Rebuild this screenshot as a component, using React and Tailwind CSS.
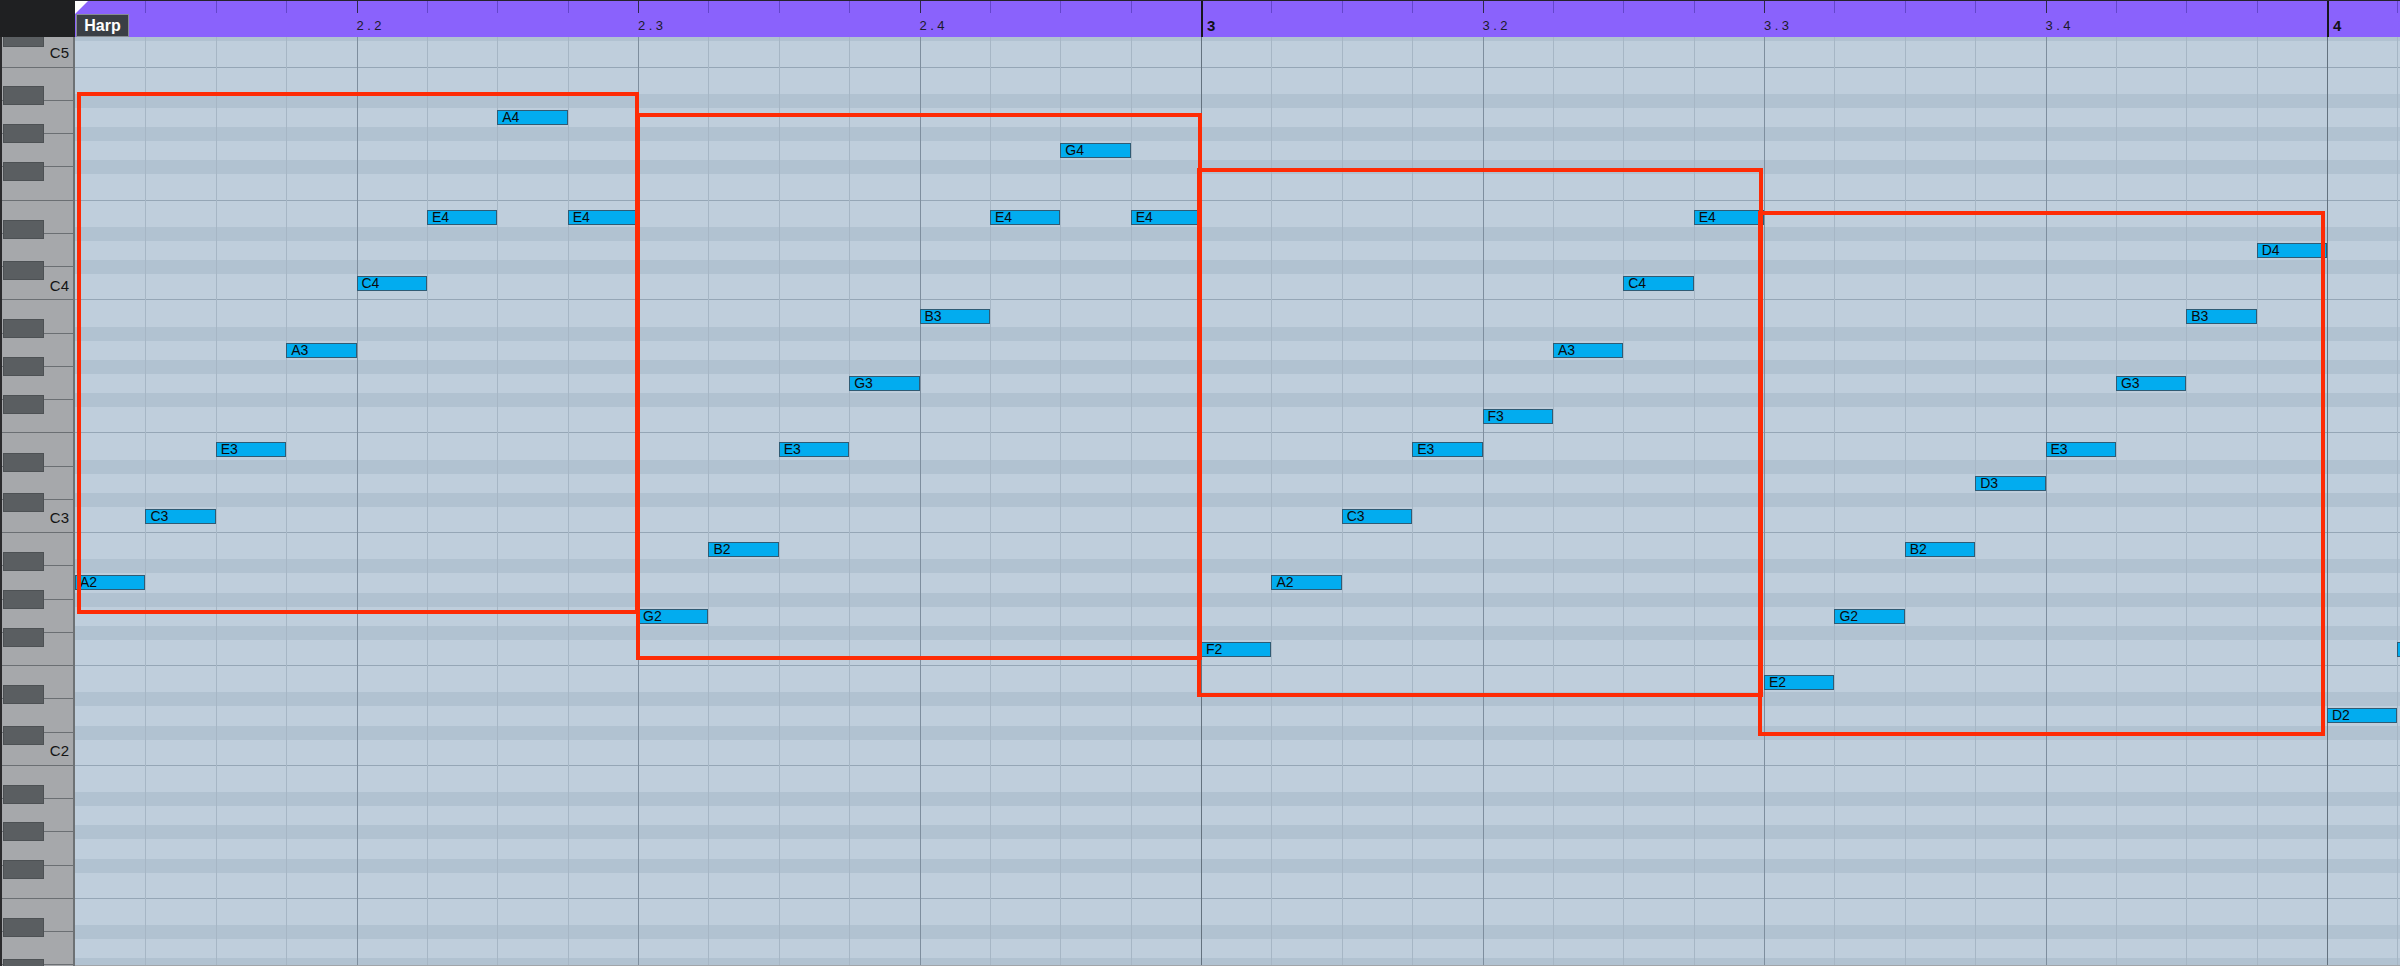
import React from "react";

const COL = 70.375;
const ROW = 33.25;
const ROW0 = -2.7; // top of the C5 row, measured from the top of the roll body
const NAMES = ["C", "B", "A", "G", "F", "E", "D"];

// white-key rows, C5 at the top down to D1
const rows = Array.from({ length: 28 }, (_, k) => {
  const name = NAMES[k % 7];
  const oct = 5 - Math.floor((k + 6) / 7);
  return {
    k,
    name,
    label: name + oct,
    bandTop: name !== "B" && name !== "E",
    bandBottom: name !== "C" && name !== "F",
    line: name === "C" || name === "F",
  };
});

const rowOf = (label) => rows.find((r) => r.label === label).k;

const NOTES = [
  "A2", "C3", "E3", "A3", "C4", "E4", "A4", "E4",
  "G2", "B2", "E3", "G3", "B3", "E4", "G4", "E4",
  "F2", "A2", "C3", "E3", "F3", "A3", "C4", "E4",
  "E2", "G2", "B2", "D3", "E3", "G3", "B3", "D4",
  "D2", "F2",
];

const LABELS = {
  4: "2.2", 8: "2.3", 12: "2.4", 16: "3",
  20: "3.2", 24: "3.3", 28: "3.4", 32: "4",
};

const cols = Array.from({ length: 34 }, (_, i) => i);

// black keys: offset from the white boundary they sit on
const blackKeys = [];
[0, 7, 14, 21, 28].forEach((c) => {
  blackKeys.push(ROW0 + ROW * c - 6.4);
  blackKeys.push(ROW0 + ROW * (c - 1) - 13.9);
  blackKeys.push(ROW0 + ROW * (c - 3) - 5.3);
  blackKeys.push(ROW0 + ROW * (c - 4) - 10);
  blackKeys.push(ROW0 + ROW * (c - 5) - 14.5);
});
const visibleKeys = blackKeys.filter((t) => t > -20 && t < 930);

function HeaderCol({ i }) {
  const label = LABELS[i];
  const bar = i > 0 && i % 16 === 0;
  const beat = i % 4 === 0;
  if (bar) {
    return (
      <div className="h-full w-[70.375px] shrink-0 border-l-2 border-[#17161d] pl-[4px] pt-[16px] text-[15px] font-bold leading-[18px] text-[#121117]">
        {label}
      </div>
    );
  }
  return (
    <div className="h-full w-[70.375px] shrink-0">
      {i > 0 && (
        <div className={"h-[12px] w-px " + (beat ? "bg-[#2e2947]" : "bg-[#6446cb]")} />
      )}
      {label && (
        <div className="mt-[5px] text-[13px] leading-[16px] tracking-[3.5px] text-[#1c1a2a]">
          {label}
        </div>
      )}
    </div>
  );
}

function lineCls(i) {
  if (i === 0) return "";
  if (i % 16 === 0) return "border-l-[1.5px] border-[#64727f]";
  if (i % 4 === 0) return "border-l border-[#7e8e9e]";
  return "border-l border-[#a6b6c5]";
}

export default function App() {
  return (
    <div className="flex h-[966px] w-[2400px] flex-col overflow-hidden bg-[#1f2022] font-['Liberation_Sans',Arial,sans-serif]">
      {/* ruler */}
      <div className="flex h-[37px] shrink-0">
        <div className="w-[75px] shrink-0 bg-[#1f2022]" />
        <div className="relative flex flex-1 overflow-hidden border-t border-[#25232d] bg-[#8a62fc]">
          {cols.map((i) => (
            <HeaderCol key={i} i={i} />
          ))}
          <svg className="absolute -top-[1px] left-0" width="14" height="14" viewBox="0 0 14 14">
            <polygon points="0,0 14,0 0,14" fill="#ffffff" />
          </svg>
          <div className="absolute left-[1px] top-[13px] flex h-[23px] w-[53px] items-center justify-center border border-[#868c92] bg-[#3a3f45] text-[16px] font-bold leading-none text-white">
            Harp
          </div>
        </div>
      </div>

      <div className="flex flex-1">
        {/* keyboard */}
        <div className="relative w-[75px] shrink-0 overflow-hidden border-l-2 border-r-2 border-l-[#2b2b2d] border-r-[#6d7174] bg-[#a6a8ab]">
          <div className="-mt-[2.7px] flex flex-col">
            {rows.map((r) => (
              <div
                key={r.k}
                className="flex h-[33.25px] shrink-0 items-center justify-end border-b border-[#6b6f73] pr-[4px] pt-[4px] text-[15px] leading-none text-[#141414]"
              >
                {r.name === "C" ? r.label : null}
              </div>
            ))}
          </div>
          {visibleKeys.map((t, n) => (
            <div
              key={n}
              className="absolute left-[1px] h-[19px] w-[41px] border border-[#4d5154] bg-[#5a5e61]"
              style={{ top: t }}
            />
          ))}
        </div>

        {/* note grid */}
        <div className="relative flex-1 overflow-hidden border-b-[3px] border-[#a1a5a9] bg-[#bfcedc]">
          <div className="-mt-[2.7px] flex flex-col">
            {rows.map((r) => (
              <div
                key={r.k}
                className={
                  "flex h-[33.25px] shrink-0 flex-col " +
                  (r.line ? "border-b border-[#95a6b6]" : "")
                }
              >
                {r.bandTop && <div className="h-[7px] bg-[#b1c2d1]" />}
                <div className="flex-1" />
                {r.bandBottom && <div className="h-[7px] bg-[#b1c2d1]" />}
              </div>
            ))}
          </div>

          <div className="pointer-events-none absolute inset-0 flex">
            {cols.map((i) => (
              <div key={i} className={"h-full w-[70.375px] shrink-0 " + lineCls(i)} />
            ))}
          </div>

          {NOTES.map((n, i) => (
            <div
              key={i}
              className="absolute flex h-[15px] w-[70.4px] items-center border border-[#2f5b74] bg-[#02acef] pl-[4px] text-[14px] leading-[13px] text-[#0b0b0b]"
              style={{ left: i * COL, top: ROW0 + rowOf(n) * ROW + 9.1 }}
            >
              {/* the last note only peeks in at the right edge, its name is off-screen */}
              {i < NOTES.length - 1 ? n : null}
            </div>
          ))}

          <div className="absolute left-[1.7px] top-[55.3px] h-[522.2px] w-[562.3px] border-[4.5px] border-[#fe2b05]" />
          <div className="absolute left-[561px] top-[75.5px] h-[547px] w-[566px] border-[4.5px] border-[#fe2b05]" />
          <div className="absolute left-[1122px] top-[131.3px] h-[528.7px] w-[565.5px] border-[4.5px] border-[#fe2b05]" />
          <div className="absolute left-[1683px] top-[173.5px] h-[525.5px] w-[567.3px] border-[4.5px] border-[#fe2b05]" />
        </div>
      </div>
    </div>
  );
}
